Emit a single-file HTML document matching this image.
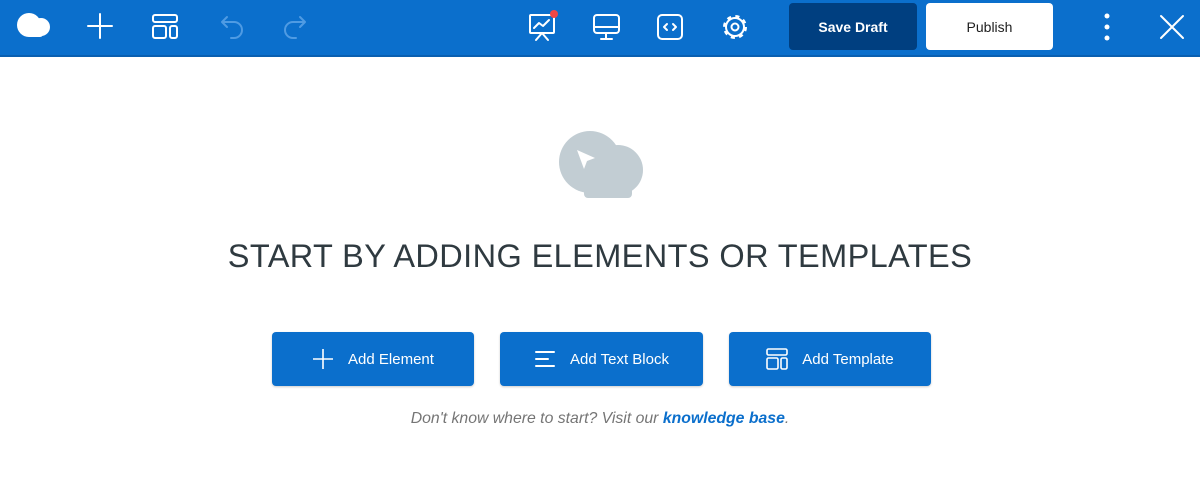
<!DOCTYPE html><html><head><style>
body{margin:0;width:1200px;height:488px;background:#fff;font-family:"Liberation Sans",sans-serif;position:relative;overflow:hidden}
.hdr{position:absolute;left:0;top:0;width:1200px;height:55px;background:#0b6fcc;border-bottom:2px solid #0a5fb0}
.ic{position:absolute}
.b{position:absolute;border-radius:4px;font-size:14px;display:flex;align-items:center;justify-content:center}
.pb{position:absolute;top:332px;height:54px;background:#0b6fcc;border-radius:4px;color:#fff;font-size:15px;display:flex;align-items:center;justify-content:center;gap:14px;box-shadow:0 1px 2px rgba(0,0,0,.2)}
</style></head><body>
<div class="hdr"></div>
<svg class="ic" style="left:0;top:0" width="1200" height="56" fill="none" stroke="#fff" stroke-width="2" stroke-linecap="round" stroke-linejoin="round">
<g fill="#fff" stroke="none"><circle cx="29" cy="25" r="12"/><circle cx="41" cy="27" r="9"/><rect x="27" y="26" width="16" height="11" rx="3"/></g>
<path d="M100 14v24M88 26h24"/>
<rect x="153" y="15" width="24" height="7" rx="2"/><rect x="153" y="26" width="13" height="12" rx="2"/><rect x="170" y="26" width="7" height="12" rx="2"/>
<g stroke="#4f9be3"><path d="M222 22h12a8 8 0 0 1 0 16h-3M222 22l5-5M222 22l5 5"/><path d="M305 22h-12a8 8 0 0 0 0 16h3M305 22l-5-5M305 22l-5 5"/></g>
<rect x="530" y="15" width="24" height="18" rx="1"/><path d="M534 28l5-5 4 3 6-6M542 33l-6 7M542 33l6 7"/><circle cx="554" cy="14" r="4" fill="#f04747" stroke="none"/>
<rect x="594" y="15" width="25" height="18" rx="3"/><path d="M594 27h25M606 33v5M601 39h11"/>
<rect x="658" y="15" width="24" height="24" rx="4"/><path d="M667 24l-3 3 3 3M673 24l3 3-3 3"/>
<circle cx="735" cy="27" r="9"/><circle cx="735" cy="27" r="10.5" stroke-width="3" stroke-dasharray="4 4.25" stroke-linecap="butt"/><circle cx="735" cy="27" r="3.5"/>
<g fill="#fff" stroke="none"><circle cx="1107" cy="16" r="2.5"/><circle cx="1107" cy="27" r="2.5"/><circle cx="1107" cy="38" r="2.5"/></g>
<path d="M1161 16l22 22M1183 16l-22 22"/>
</svg>
<div class="b" style="left:789px;top:3px;width:128px;height:47px;background:#003f80;color:#fff;font-weight:bold">Save Draft</div>
<div class="b" style="left:926px;top:3px;width:127px;height:47px;background:#fff;color:#1e1e1e">Publish</div>
<svg class="ic" style="left:550px;top:125px" width="100" height="80"><g fill="#c2cdd3"><circle cx="40" cy="37" r="31"/><circle cx="68" cy="45" r="25"/><rect x="34" y="40" width="48" height="33" rx="4"/></g><path d="M27 25l18 8-8 3-3 8z" fill="#fff"/></svg>
<div style="position:absolute;left:0;width:1200px;top:238px;text-align:center;font-size:32.5px;color:#2f3a40;letter-spacing:.4px">START BY ADDING ELEMENTS OR TEMPLATES</div>
<div class="pb" style="left:272px;width:202px"><svg width="22" height="22" stroke="#fff" stroke-width="1.6"><path d="M11 1v20M1 11h20"/></svg>Add Element</div>
<div class="pb" style="left:500px;width:203px"><svg width="22" height="18" stroke="#fff" stroke-width="2" stroke-linecap="round"><path d="M2 2h18M2 9h12M2 16h18"/></svg>Add Text Block</div>
<div class="pb" style="left:729px;width:202px"><svg width="22" height="22" fill="none" stroke="#fff" stroke-width="1.6"><rect x="1" y="1" width="20" height="6" rx="1.5"/><rect x="1" y="10" width="11" height="11" rx="1.5"/><rect x="15" y="10" width="6" height="11" rx="1.5"/></svg>Add Template</div>
<div style="position:absolute;left:0;width:1200px;top:410px;text-align:center;font-size:15.8px;color:#757575;font-style:italic">Don't know where to start? Visit our <b style="color:#0b6fcc">knowledge base</b>.</div>
</body></html>
